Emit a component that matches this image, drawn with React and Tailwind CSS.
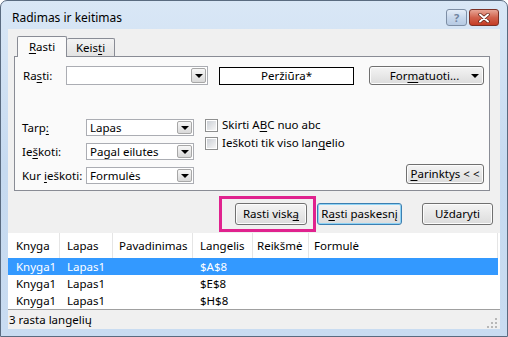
import clsx from "clsx";

const FONT = { fontFamily: '"Noto Sans", "Open Sans", sans-serif' };

// pabrauktas spartusis klavisas
function U({ children }) {
  return <span className="underline decoration-1 underline-offset-[2px]">{children}</span>;
}

function Arrow() {
  return <div className="h-0 w-0 border-x-[4px] border-t-[4px] border-x-transparent border-t-black" />;
}

function DropBtn() {
  return (
    <div className="m-px flex w-[15px] items-center justify-center self-stretch rounded-[2px] border border-[#a7a7a7] bg-gradient-to-b from-[#f7f7f7] to-[#d9d9d9]">
      <Arrow />
    </div>
  );
}

function Combo({ className, text }) {
  return (
    <div className={clsx("flex items-stretch border border-[#abadb3] bg-white", className)}>
      <div className="flex flex-1 items-center pl-[3px] text-[11.5px] leading-none text-black">{text}</div>
      <DropBtn />
    </div>
  );
}

function Btn({ className, focused, children }) {
  return (
    <div
      className={clsx(
        "flex items-center justify-center rounded-[3px] border text-[11.5px] leading-none text-black",
        focused
          ? "border-[#3c7fb1] bg-gradient-to-b from-[#f4f4f4] to-[#dcdcdc] shadow-[inset_0_0_0_1px_#8fd3f5]"
          : "border-[#707070] bg-gradient-to-b from-[#f4f4f4] to-[#dcdcdc] shadow-[inset_0_0_0_1px_#fcfcfc]",
        className
      )}
    >
      {children}
    </div>
  );
}

function Check({ children }) {
  return (
    <div className="flex h-[18px] items-center gap-[4px]">
      <div className="flex h-[13px] w-[13px] items-center justify-center border border-[#8e8f8f] bg-white">
        <div className="h-[9px] w-[9px] bg-gradient-to-br from-[#cbcfd5] to-[#f6f6f6]" />
      </div>
      <span className="text-[11.5px] leading-none text-black">{children}</span>
    </div>
  );
}

const cols = [
  { w: "w-[52px]", pl: "pl-[8px]" },
  { w: "w-[53px]", pl: "pl-[7px]" },
  { w: "w-[80px]", pl: "pl-[6px]" },
  { w: "w-[60px]", pl: "pl-[7px]" },
  { w: "w-[56px]", pl: "pl-[4px]" },
  { w: "flex-1", pl: "pl-[5px]" },
];

const header = ["Knyga", "Lapas", "Pavadinimas", "Langelis", "Reikšmė", "Formulė"];

const rows = [
  ["Knyga1", "Lapas1", "", "$A$8", "", ""],
  ["Knyga1", "Lapas1", "", "$E$8", "", ""],
  ["Knyga1", "Lapas1", "", "$H$8", "", ""],
];

export default function App() {
  return (
    <div style={FONT} className="h-[337px] w-[508px] overflow-hidden">
      <div className="flex h-full w-full flex-col rounded-t-[7px] border border-[#5a6b80] bg-gradient-to-b from-[#d9e7f6] via-[#c6daf0] to-[#c9dcf1]">
        {/* antraste */}
        <div className="flex h-[28px] items-start">
          <span className="mt-[9px] pl-[11px] text-[12px] leading-[16px] text-black">Radimas ir keitimas</span>
          <div className="ml-auto mr-[8px] mt-[8px] flex gap-[2px]">
            <div className="flex h-[17px] w-[21px] items-center justify-center rounded-[3px] border border-[#7d8ea5] bg-gradient-to-b from-[#e4edf8] via-[#c8d8ec] to-[#b6cae3] text-[11px] font-bold leading-none text-[#7083a0]">
              ?
            </div>
            <div className="flex h-[17px] w-[30px] items-center justify-center rounded-[3px] border border-[#7b3126] bg-gradient-to-b from-[#e7a596] via-[#d1624d] to-[#c43b24]">
              <svg width="12" height="10" viewBox="0 0 12 10">
                <path d="M2 1.5 L10 8.5 M10 1.5 L2 8.5" stroke="#5b1e14" strokeWidth="3.4" strokeLinecap="round" />
                <path d="M2 1.5 L10 8.5 M10 1.5 L2 8.5" stroke="#ffffff" strokeWidth="2" strokeLinecap="round" />
              </svg>
            </div>
          </div>
        </div>

        {/* turinys */}
        <div className="mx-[7px] mb-[7px] flex flex-1 flex-col bg-[#f0f0f0]">
          {/* korteles */}
          <div className="ml-[9px] mt-[7px] flex h-[20px] items-end">
            <div className="relative z-10 -mb-px flex h-[21px] w-[50px] items-center justify-center rounded-t-[2px] border border-b-0 border-[#898c95] bg-[#fafafa] text-[11.5px] leading-none text-black">
              <U>R</U>asti
            </div>
            <div className="flex h-[18px] w-[48px] items-center justify-center rounded-t-[2px] border border-b-0 border-l-0 border-[#898c95] bg-gradient-to-b from-[#f3f3f3] to-[#e3e3e3] text-[11.5px] leading-none text-black">
              Keis<U>t</U>i
            </div>
          </div>

          {/* korteles turinys */}
          <div className="ml-[6px] flex h-[135px] w-[476px] flex-col border border-[#898c95] bg-[#fafafa] pr-[5px]">
            <div className="mt-[9px] flex items-center">
              <span className="w-[51px] pl-[8px] text-[11.5px] leading-none text-black">
                Ra<U>s</U>ti:
              </span>
              <Combo className="h-[19px] w-[142px]" text="" />
              <div className="ml-[11px] flex h-[18px] w-[135px] items-center justify-center border border-black bg-white text-[11.5px] leading-none text-black">
                Peržiūra*
              </div>
              <Btn className="ml-auto h-[19px] w-[115px]">
                <span className="flex-1 pl-[8px] text-center">
                  For<U>m</U>atuoti...
                </span>
                <span className="pr-[4px]">
                  <Arrow />
                </span>
              </Btn>
            </div>

            <div className="mt-[34px] flex">
              <div className="flex flex-col gap-[7px]">
                {[
                  [<>Tarp<U>:</U></>, "Lapas"],
                  [<>Ie<U>š</U>koti:</>, "Pagal eilutes"],
                  [<>Kur <U>i</U>eškoti:</>, "Formulės"],
                ].map(([label, val], i) => (
                  <div key={i} className="flex items-center">
                    <span className="w-[71px] pl-[7px] text-[11.5px] leading-none text-black">{label}</span>
                    <Combo className="h-[17px] w-[108px]" text={val} />
                  </div>
                ))}
              </div>
              <div className="ml-[11px] -mt-[3px] flex flex-col">
                <Check>
                  Skirti A<U>B</U>C nuo abc
                </Check>
                <Check>
                  Ieškoti tik viso lan<U>g</U>elio
                </Check>
              </div>
              <Btn className="ml-auto mt-[45px] h-[20px] w-[78px]">
                <span>
                  <U>P</U>arinktys &lt; &lt;
                </span>
              </Btn>
            </div>
          </div>

          {/* mygtukai */}
          <div className="mt-[5px] flex items-center justify-end pr-[7px]">
            <div className="flex h-[36px] w-[97px] items-center border-[3px] border-[#e0228e] pl-[13px]">
              <Btn className="h-[22px] w-[72px]">
                Rasti visk<U>ą</U>
              </Btn>
            </div>
            <Btn focused className="ml-px h-[22px] w-[85px]">
              R<U>a</U>sti paskesnį
            </Btn>
            <Btn className="ml-[20px] h-[22px] w-[71px]">Uždaryti</Btn>
          </div>

          {/* rezultatai */}
          <div className="mt-px flex h-[77px] flex-col border-b border-[#a0a0a0] bg-white pr-[2px]">
            <div className="flex h-[25px]">
              {header.map((h, i) => (
                <div
                  key={h}
                  className={clsx(
                    "flex items-center border-r border-[#e5e5e5] text-[11.5px] leading-none text-black",
                    cols[i].w,
                    cols[i].pl
                  )}
                >
                  {h}
                </div>
              ))}
            </div>
            {rows.map((r, ri) => (
              <div key={ri} className={clsx("flex h-[17px]", ri === 0 && "bg-[#3399ff]")}>
                {r.map((c, i) => (
                  <div
                    key={i}
                    className={clsx(
                      "flex items-center text-[11.5px] leading-none",
                      ri === 0 ? "text-white" : "text-black",
                      cols[i].w,
                      cols[i].pl
                    )}
                  >
                    {c}
                  </div>
                ))}
              </div>
            ))}
          </div>

          {/* busenos juosta */}
          <div className="flex flex-1 items-center justify-between">
            <span className="pl-px text-[11.5px] leading-none text-black">3 rasta langelių</span>
            <svg width="12" height="12" viewBox="0 0 12 12" className="mr-[2px] self-end">
              {[
                [9, 1],
                [9, 5],
                [5, 5],
                [9, 9],
                [5, 9],
                [1, 9],
              ].map(([x, y], i) => (
                <rect key={i} x={x} y={y} width="2" height="2" fill="#b8b8b8" />
              ))}
            </svg>
          </div>
        </div>
      </div>
    </div>
  );
}
